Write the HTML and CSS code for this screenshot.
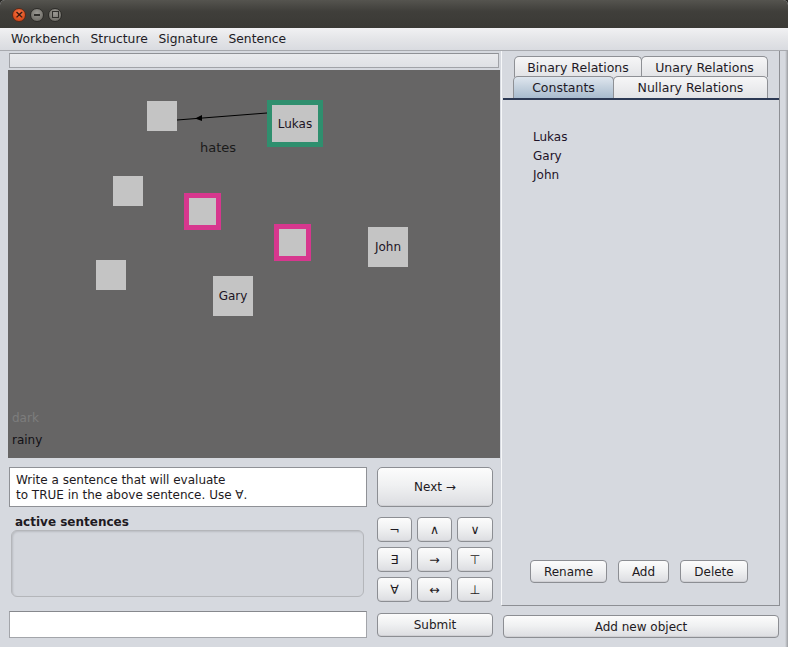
FILE: index.html
```html
<!DOCTYPE html>
<html>
<head>
<meta charset="utf-8">
<link rel="stylesheet" href="styles.css">
</head>
<body>
<div class="window">
  <div class="titlebar">
    <span class="wbtn close">×</span>
    <span class="wbtn min"><span class="minbar"></span></span>
    <span class="wbtn max"><span class="maxbox"></span></span>
  </div>
  <div class="menubar">
    <span>Workbench</span><span>Structure</span><span>Signature</span><span>Sentence</span>
  </div>
  <div class="main">
    <div class="left">
      <div class="strip"></div>
      <div class="canvas">
        <svg class="arrows" width="492" height="388" viewBox="0 0 492 388">
          <line x1="259" y1="43" x2="169" y2="50" stroke="#000" stroke-width="1"/>
          <polygon points="187,48.6 194,45 194,51" fill="#000"/>
        </svg>
        <div class="obj plain" style="left:139px;top:31px"></div>
        <div class="obj named green" style="left:259px;top:30px;width:56px;height:47px">Lukas</div>
        <div class="label" style="left:192px;top:70px">hates</div>
        <div class="obj plain" style="left:105px;top:106px"></div>
        <div class="obj pink" style="left:176px;top:123px"></div>
        <div class="obj pink" style="left:266px;top:154px"></div>
        <div class="obj named" style="left:360px;top:157px">John</div>
        <div class="obj plain" style="left:88px;top:190px"></div>
        <div class="obj named" style="left:205px;top:206px">Gary</div>
        <div class="prop dark">dark</div>
        <div class="prop rainy">rainy</div>
      </div>
      <div class="bottom">
        <div class="bcol">
          <div class="prompt">Write a sentence that will evaluate<br>to TRUE in the above sentence. Use ∀.</div>
          <div class="active-label">active sentences</div>
          <div class="active-box"></div>
          <div class="input"></div>
        </div>
        <div class="bcol">
          <button class="btn next">Next →</button>
          <div class="ops">
            <button class="btn op">¬</button>
            <button class="btn op">∧</button>
            <button class="btn op">∨</button>
            <button class="btn op">∃</button>
            <button class="btn op">→</button>
            <button class="btn op">⊤</button>
            <button class="btn op">∀</button>
            <button class="btn op">↔</button>
            <button class="btn op">⊥</button>
          </div>
          <button class="btn submit">Submit</button>
        </div>
      </div>
    </div>
    <div class="right">
      <div class="panel">
        <div class="tabs">
          <div class="tabrow row1">
            <div class="tab" style="width:128px">Binary Relations</div>
            <div class="tab" style="width:127px">Unary Relations</div>
          </div>
          <div class="tabrow row2">
            <div class="tab selected" style="width:101px">Constants</div>
            <div class="tab" style="width:155px">Nullary Relations</div>
          </div>
        </div>
        <div class="tabline"></div>
        <div class="content">
          <div class="list">
            <div>Lukas</div>
            <div>Gary</div>
            <div>John</div>
          </div>
          <div class="actions">
            <button class="btn small" style="width:77px">Rename</button>
            <button class="btn small" style="width:51px">Add</button>
            <button class="btn small" style="width:68px">Delete</button>
          </div>
        </div>
      </div>
      <button class="btn wide">Add new object</button>
    </div>
    <div class="frame"></div>
  </div>
</div>
</body>
</html>
```
FILE: styles.css
```css
html, body {
  margin: 0;
  padding: 0;
  background: #2b2a27;
}
body {
  font-family: "DejaVu Sans", sans-serif;
  font-size: 12px;
  color: #1e1a22;
}
.window {
  width: 788px;
  height: 647px;
  background: #d6d9df;
  display: flex;
  flex-direction: column;
  overflow: hidden;
  border-radius: 5px 5px 0 0;
}
.titlebar {
  height: 28px;
  background: linear-gradient(#55544f, #403f3b 40%, #3a3935);
  display: flex;
  align-items: center;
  padding-left: 12px;
  gap: 4px;
  box-sizing: border-box;
  padding-top: 1px;
}
.wbtn {
  width: 14px;
  height: 14px;
  border-radius: 50%;
  display: flex;
  align-items: center;
  justify-content: center;
  box-sizing: border-box;
}
.close {
  background: radial-gradient(circle at 50% 35%, #f47a50, #e0501f 60%, #c2401a);
  color: #3a1408;
  font-size: 11px;
  line-height: 1;
  font-weight: bold;
  border: 1px solid #5a2a1a;
}
.min, .max {
  background: radial-gradient(circle at 50% 35%, #9a9893, #77756f 65%, #5e5c57);
  border: 1px solid #2d2c29;
}
.minbar {
  width: 6px;
  height: 2px;
  background: #2f2e2b;
}
.maxbox {
  width: 5px;
  height: 5px;
  border: 1px solid #2f2e2b;
}
.menubar {
  height: 22px;
  background: linear-gradient(#f1f1f3, #e4e5e8 50%, #d9dbe0);
  border-bottom: 1px solid #a7a9ae;
  display: flex;
  align-items: center;
  padding-left: 11px;
  gap: 10.7px;
  font-size: 12.3px;
  color: #221c26;
}
.main {
  flex: 1;
  display: flex;
}
.left {
  width: 501px;
  display: flex;
  flex-direction: column;
}
.strip {
  margin: 2px 0 0 9px;
  width: 490px;
  height: 15px;
  box-sizing: border-box;
  border: 1px solid #a1a3a8;
  border-top-color: #8f9196;
  background: linear-gradient(#e9eaed, #dfe1e5);
}
.canvas {
  margin: 2px 0 0 8px;
  width: 492px;
  height: 388px;
  background: #666565;
  position: relative;
}
.arrows {
  position: absolute;
  left: 0;
  top: 0;
}
.obj {
  position: absolute;
  box-sizing: border-box;
  background: #c4c4c4;
}
.plain {
  width: 30px;
  height: 30px;
}
.named {
  width: 40px;
  height: 40px;
  display: flex;
  align-items: center;
  justify-content: center;
  color: #1c1424;
}
.green {
  border: 5px solid #2f8f6e;
}
.pink {
  width: 37px;
  height: 37px;
  border: 5px solid #d7378e;
}
.label {
  position: absolute;
  font-size: 13px;
  color: #1a1a1a;
}
.prop {
  position: absolute;
  left: 4px;
}
.dark {
  top: 341px;
  color: #7d7d7d;
}
.rainy {
  top: 363px;
  color: #121015;
}
.bottom {
  flex: 1;
  display: flex;
  gap: 10px;
  padding: 9px 0 0 9px;
}
.bcol {
  display: flex;
  flex-direction: column;
}
.bcol:first-child {
  width: 358px;
}
.bcol:last-child {
  width: 116px;
}
.prompt {
  height: 40px;
  box-sizing: border-box;
  background: #fff;
  border: 1px solid #8f9196;
  padding: 5px 0 0 6px;
  line-height: 15px;
  font-size: 12px;
}
.active-label {
  font-weight: bold;
  font-size: 12px;
  margin: 8px 0 0 6px;
  height: 15px;
}
.active-box {
  margin-left: 2px;
  width: 353px;
  height: 67px;
  box-sizing: border-box;
  border: 1px solid #b4b6ba;
  border-radius: 6px;
  background: #d3d6dc;
  box-shadow: inset 1px 1px 2px rgba(0, 0, 0, 0.12);
}
.input {
  margin-top: 14px;
  height: 27px;
  box-sizing: border-box;
  background: #fff;
  border: 1px solid #a3a5aa;
  border-top-color: #86888d;
}
.btn {
  font-family: "DejaVu Sans", sans-serif;
  font-size: 12px;
  color: #1e1a22;
  background: linear-gradient(#fcfcfc, #f0f1f2 45%, #dcdde1);
  border: 1px solid #8c8e93;
  border-radius: 4px;
  padding: 0;
  box-sizing: border-box;
  box-shadow: inset 0 -1px 0 rgba(0, 0, 0, 0.06);
}
.next {
  height: 40px;
  width: 116px;
  border-radius: 5px;
}
.ops {
  margin-top: 10px;
  display: grid;
  grid-template-columns: 35px 35px 36px;
  grid-template-rows: 25px 25px 25px;
  gap: 5px;
}
.op {
  font-size: 12.5px;
}
.submit {
  margin-top: 11px;
  height: 24px;
  width: 116px;
}
.right {
  width: 284px;
  display: flex;
  flex-direction: column;
}
.frame {
  width: 3px;
  background: linear-gradient(90deg, #d6d9df, #9c9ea2);
}
.panel {
  width: 279px;
  height: 555px;
  box-sizing: border-box;
  border-left: 1px solid #f6f7f9;
  border-right: 1px solid #8d8f94;
  border-bottom: 1px solid #8d8f94;
  padding: 5px 0 0 1px;
  display: flex;
  flex-direction: column;
}
.tabs {
  height: 42px;
  display: flex;
  flex-direction: column;
}
.tabrow {
  display: flex;
}
.row1 {
  height: 20px;
  padding-left: 11px;
}
.row2 {
  height: 22px;
  padding-left: 10px;
}
.tab {
  box-sizing: border-box;
  border: 1px solid #8e9095;
  border-bottom: none;
  border-radius: 5px 5px 0 0;
  background: linear-gradient(#f6f6f7, #e2e3e6);
  display: flex;
  align-items: center;
  justify-content: center;
  font-size: 12.5px;
  color: #1e1a26;
  margin-right: -1px;
}
.row1 .tab {
  height: 21px;
}
.row2 .tab {
  height: 22px;
  position: relative;
}
.tab.selected {
  background: linear-gradient(#dfe6ee, #c3d0dd 50%, #a9bccf);
}
.tabline {
  width: 276px;
  height: 2px;
  background: #2c3954;
}
.content {
  flex: 1;
  display: flex;
  flex-direction: column;
}
.list {
  flex: 1;
  padding: 28px 0 0 30px;
  line-height: 19px;
  font-size: 12px;
  color: #1e1228;
}
.actions {
  display: flex;
  justify-content: center;
  gap: 11px;
  margin-bottom: 22px;
  padding-right: 4px;
}
.small {
  height: 23px;
}
.wide {
  margin: 9px 0 0 2px;
  width: 276px;
  height: 23px;
}
```
